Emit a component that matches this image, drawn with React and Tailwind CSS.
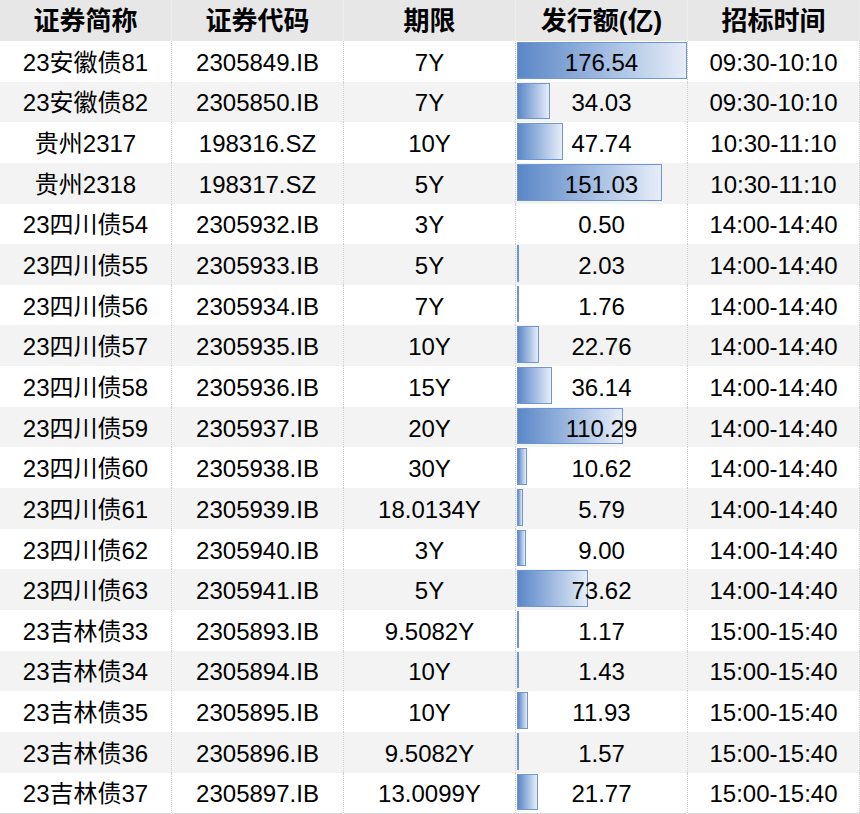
import React from "react";

const rows = [
  ["23安徽债81", "2305849.IB", "7Y", 176.54, "09:30-10:10"],
  ["23安徽债82", "2305850.IB", "7Y", 34.03, "09:30-10:10"],
  ["贵州2317", "198316.SZ", "10Y", 47.74, "10:30-11:10"],
  ["贵州2318", "198317.SZ", "5Y", 151.03, "10:30-11:10"],
  ["23四川债54", "2305932.IB", "3Y", 0.5, "14:00-14:40"],
  ["23四川债55", "2305933.IB", "5Y", 2.03, "14:00-14:40"],
  ["23四川债56", "2305934.IB", "7Y", 1.76, "14:00-14:40"],
  ["23四川债57", "2305935.IB", "10Y", 22.76, "14:00-14:40"],
  ["23四川债58", "2305936.IB", "15Y", 36.14, "14:00-14:40"],
  ["23四川债59", "2305937.IB", "20Y", 110.29, "14:00-14:40"],
  ["23四川债60", "2305938.IB", "30Y", 10.62, "14:00-14:40"],
  ["23四川债61", "2305939.IB", "18.0134Y", 5.79, "14:00-14:40"],
  ["23四川债62", "2305940.IB", "3Y", 9.0, "14:00-14:40"],
  ["23四川债63", "2305941.IB", "5Y", 73.62, "14:00-14:40"],
  ["23吉林债33", "2305893.IB", "9.5082Y", 1.17, "15:00-15:40"],
  ["23吉林债34", "2305894.IB", "10Y", 1.43, "15:00-15:40"],
  ["23吉林债35", "2305895.IB", "10Y", 11.93, "15:00-15:40"],
  ["23吉林债36", "2305896.IB", "9.5082Y", 1.57, "15:00-15:40"],
  ["23吉林债37", "2305897.IB", "13.0099Y", 21.77, "15:00-15:40"],
];

const headers = ["证券简称", "证券代码", "期限", "发行额(亿)", "招标时间"];
const MAX = 176.54;
const MAXW = 170;

const font = { fontFamily: '"Liberation Sans", "Noto Sans CJK SC", sans-serif' };

function Cell({ children, header }) {
  return (
    <div
      className={
        "relative flex items-center justify-center border-r border-dotted " +
        (header ? "border-[#f4f4f4]" : "border-[#cfcfcf]")
      }
    >
      {children}
    </div>
  );
}

export default function App() {
  return (
    <div
      className="w-[860px] h-[814px] bg-white text-black overflow-hidden"
      style={font}
    >
      <div className="grid grid-cols-5 h-[41px] bg-[#e7e7e7] text-[26px] font-bold">
        {headers.map((h) => (
          <Cell key={h} header>
            <span className="pt-[1px]">{h}</span>
          </Cell>
        ))}
      </div>
      {rows.map((r, i) => {
        const w = (r[3] / MAX) * MAXW;
        return (
          <div
            key={r[1]}
            className={
              "grid grid-cols-5 h-[40.65px] text-[24px] " +
              (i % 2 === 0 ? "bg-white" : "bg-[#f3f3f3]")
            }
          >
            <Cell>
              <span className="pt-[3px]">{r[0]}</span>
            </Cell>
            <Cell>
              <span className="pt-[3px]">{r[1]}</span>
            </Cell>
            <Cell>
              <span className="pt-[3px]">{r[2]}</span>
            </Cell>
            <Cell>
              {w >= 1 && (
                <div
                  className="absolute left-[1px] top-[1px] bottom-[3px] border border-[#7096d1] bg-gradient-to-r from-[#5b87c7] to-[#e6edf7]"
                  style={{ width: w + "px" }}
                />
              )}
              <span className="relative pt-[3px]">{r[3].toFixed(2)}</span>
            </Cell>
            <Cell>
              <span className="pt-[3px]">{r[4]}</span>
            </Cell>
          </div>
        );
      })}
      <div className="h-[1px] bg-[#d9d9d9]" />
    </div>
  );
}
